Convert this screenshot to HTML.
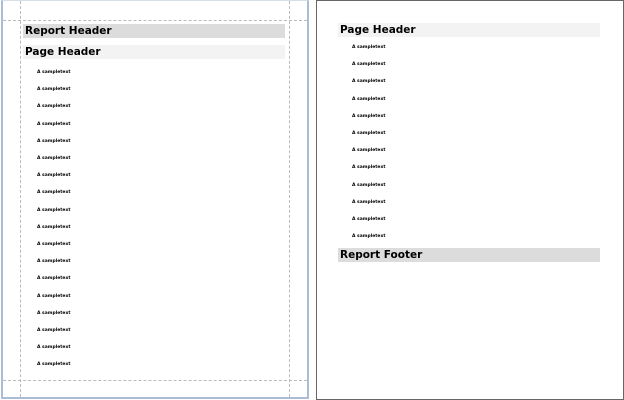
<!DOCTYPE html>
<html><head><style>
body{margin:0;width:624px;height:400px;background:#fff;position:relative;overflow:hidden;font-family:"DejaVu Sans","Liberation Sans",sans-serif}
div{position:absolute;box-sizing:border-box}
.l{border-left:2px solid #a9bdd6;border-right:2px solid #a9bdd6;border-bottom:2px solid #a9bdd6;border-top:1px solid #d8dee6;left:1px;top:0;width:308px;height:399px}
.vd{width:0;border-left:1px dashed #bbb}
.hd{height:0;border-top:1px dashed #bbb}
.r{left:316px;top:0;width:308px;height:400px;border:1px solid #666}
.bar{font-weight:bold;font-size:10.5px;line-height:14px;padding-left:2px;color:#000;height:14px}
.t{font-size:4.5px;font-weight:bold;color:#000;line-height:5px;white-space:nowrap}
</style></head><body>
<div class="l"></div>
<div class="vd" style="left:20px;top:1px;height:396px"></div>
<div class="vd" style="left:289px;top:1px;height:396px"></div>
<div class="hd" style="left:3px;top:20px;width:304px"></div>
<div class="hd" style="left:3px;top:380px;width:304px"></div>
<div class="bar" style="left:23px;top:24px;width:262px;background:#dcdcdc">Report Header</div>
<div class="bar" style="left:23px;top:45px;width:262px;background:#f3f3f3">Page Header</div>
<div class="r"></div>
<div class="bar" style="left:338px;top:23px;width:262px;background:#f3f3f3">Page Header</div>
<div class="bar" style="left:338px;top:248px;width:262px;background:#dcdcdc">Report Footer</div>
<script>
for(let i=0;i<18;i++){const d=document.createElement('div');d.className='t';d.style.left='37px';d.style.top=(70+i*17.2)+'px';d.innerHTML='A sampletext';document.body.appendChild(d);}
for(let i=0;i<12;i++){const d=document.createElement('div');d.className='t';d.style.left='352px';d.style.top=(45+i*17.2)+'px';d.innerHTML='A sampletext';document.body.appendChild(d);}
</script>
</body></html>
